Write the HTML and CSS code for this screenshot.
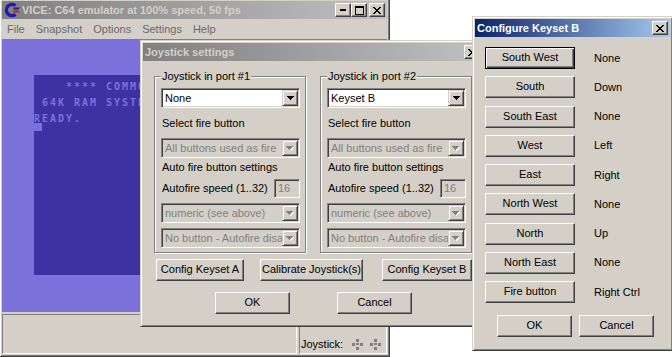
FILE: index.html
```html
<!DOCTYPE html>
<html>
<head>
<meta charset="utf-8">
<title>VICE</title>
<link rel="stylesheet" href="styles.css">
</head>
<body>
<div class="win main">
  <div class="titlebar inactive">
    <svg class="appicon" width="16" height="16" viewBox="0 0 16 16">
      <path d="M11.5 3.6 A5.6 5.6 0 1 0 11.5 12.4" fill="none" stroke="#1c1ca8" stroke-width="3.4"/>
      <path d="M9.5 5.5 H16 L14 7.6 H9.5 Z" fill="#1c1ca8"/>
      <path d="M9.5 8.4 H14 L16 10.5 H9.5 Z" fill="#d81c1c"/>
    </svg>
    <span class="title">VICE: C64 emulator at 100% speed, 50 fps</span>
    <div class="tbtns">
      <span class="tbtn"><svg width="6" height="2" viewBox="0 0 6 2"><rect width="6" height="2" fill="#000"/></svg></span>
      <span class="tbtn"><svg width="9" height="9" viewBox="0 0 9 9" shape-rendering="crispEdges"><path d="M0 0H9V9H0Z M1 2V8H8V2Z" fill="#000" fill-rule="evenodd"/></svg></span>
      <span class="tbtn gap"><svg width="8" height="7" viewBox="0 0 8 7" shape-rendering="crispEdges"><path d="M0 0h2v1h-2z M6 0h2v1h-2z M1 1h2v1h-2z M5 1h2v1h-2z M2 2h4v1h-4z M3 3h2v1h-2z M2 4h4v1h-4z M1 5h2v1h-2z M5 5h2v1h-2z M0 6h2v1h-2z M6 6h2v1h-2z" fill="#000"/></svg></span>
    </div>
  </div>
  <div class="menubar">
    <span>File</span><span>Snapshot</span><span>Options</span><span>Settings</span><span>Help</span>
  </div>
  <div class="screen">
    <div class="c64"><div class="c64line"> </div><div class="c64line">    **** COMMODORE 64 BASIC V2 ****</div><div class="c64line"> </div><div class="c64line"> 64K RAM SYSTEM  38911 BASIC BYTES FREE</div><div class="c64line"> </div><div class="c64line">READY.</div><div class="c64line"><span class="cursor"></span></div></div>
  </div>
  <div class="statusbar">
    <div class="panel p1"></div>
    <div class="panel p2">
      <span>Joystick:</span>
      <span class="joyind">
        <svg width="13" height="13" viewBox="0 0 13 13" shape-rendering="crispEdges"><g fill="#808080"><rect x="5" y="1" width="3" height="3"/><rect x="1" y="5" width="3" height="3"/><rect x="9" y="5" width="3" height="3"/><rect x="5" y="9" width="3" height="3"/><rect x="5" y="5" width="3" height="2"/></g></svg>
        <svg width="13" height="13" viewBox="0 0 13 13" shape-rendering="crispEdges"><g fill="#808080"><rect x="5" y="1" width="3" height="3"/><rect x="1" y="5" width="3" height="3"/><rect x="9" y="5" width="3" height="3"/><rect x="5" y="9" width="3" height="3"/><rect x="5" y="5" width="3" height="2"/></g></svg>
      </span>
    </div>
  </div>
</div>

<div class="win joy">
  <div class="titlebar inactive">
    <span class="title">Joystick settings</span>
    <div class="tbtns">
      <span class="tbtn"><svg width="8" height="7" viewBox="0 0 8 7" shape-rendering="crispEdges"><path d="M0 0h2v1h-2z M6 0h2v1h-2z M1 1h2v1h-2z M5 1h2v1h-2z M2 2h4v1h-4z M3 3h2v1h-2z M2 4h4v1h-4z M1 5h2v1h-2z M5 5h2v1h-2z M0 6h2v1h-2z M6 6h2v1h-2z" fill="#000"/></svg></span>
    </div>
  </div>
  <div class="joybody">
    <div class="groups">
      <fieldset class="group">
        <legend>Joystick in port #1</legend>
        <div class="combo"><span class="ctext">None</span><span class="arrow"><svg width="7" height="4" viewBox="0 0 7 4" shape-rendering="crispEdges"><path d="M0 0h7v1h-7z M1 1h5v1h-5z M2 2h3v1h-3z M3 3h1v1h-1z" fill="#000"/></svg></span></div>
        <div class="lbl l1">Select fire button</div>
        <div class="combo dis c2"><span class="ctext">All buttons used as fire</span><span class="arrow"><svg width="8" height="5" viewBox="0 0 8 5" shape-rendering="crispEdges"><path d="M1 1h7v1h-7z M2 2h5v1h-5z M3 3h3v1h-3z M4 4h1v1h-1z" fill="#fff"/><path d="M0 0h7v1h-7z M1 1h5v1h-5z M2 2h3v1h-3z M3 3h1v1h-1z" fill="#808080"/></svg></span></div>
        <div class="lbl l2">Auto fire button settings</div>
        <div class="afrow"><span>Autofire speed (1..32)</span><span class="edit">16</span></div>
        <div class="combo dis c3"><span class="ctext">numeric (see above)</span><span class="arrow"><svg width="8" height="5" viewBox="0 0 8 5" shape-rendering="crispEdges"><path d="M1 1h7v1h-7z M2 2h5v1h-5z M3 3h3v1h-3z M4 4h1v1h-1z" fill="#fff"/><path d="M0 0h7v1h-7z M1 1h5v1h-5z M2 2h3v1h-3z M3 3h1v1h-1z" fill="#808080"/></svg></span></div>
        <div class="combo dis c3"><span class="ctext">No button - Autofire disabled</span><span class="arrow"><svg width="8" height="5" viewBox="0 0 8 5" shape-rendering="crispEdges"><path d="M1 1h7v1h-7z M2 2h5v1h-5z M3 3h3v1h-3z M4 4h1v1h-1z" fill="#fff"/><path d="M0 0h7v1h-7z M1 1h5v1h-5z M2 2h3v1h-3z M3 3h1v1h-1z" fill="#808080"/></svg></span></div>
      </fieldset>
      <fieldset class="group">
        <legend>Joystick in port #2</legend>
        <div class="combo"><span class="ctext">Keyset B</span><span class="arrow"><svg width="7" height="4" viewBox="0 0 7 4" shape-rendering="crispEdges"><path d="M0 0h7v1h-7z M1 1h5v1h-5z M2 2h3v1h-3z M3 3h1v1h-1z" fill="#000"/></svg></span></div>
        <div class="lbl l1">Select fire button</div>
        <div class="combo dis c2"><span class="ctext">All buttons used as fire</span><span class="arrow"><svg width="8" height="5" viewBox="0 0 8 5" shape-rendering="crispEdges"><path d="M1 1h7v1h-7z M2 2h5v1h-5z M3 3h3v1h-3z M4 4h1v1h-1z" fill="#fff"/><path d="M0 0h7v1h-7z M1 1h5v1h-5z M2 2h3v1h-3z M3 3h1v1h-1z" fill="#808080"/></svg></span></div>
        <div class="lbl l2">Auto fire button settings</div>
        <div class="afrow"><span>Autofire speed (1..32)</span><span class="edit">16</span></div>
        <div class="combo dis c3"><span class="ctext">numeric (see above)</span><span class="arrow"><svg width="8" height="5" viewBox="0 0 8 5" shape-rendering="crispEdges"><path d="M1 1h7v1h-7z M2 2h5v1h-5z M3 3h3v1h-3z M4 4h1v1h-1z" fill="#fff"/><path d="M0 0h7v1h-7z M1 1h5v1h-5z M2 2h3v1h-3z M3 3h1v1h-1z" fill="#808080"/></svg></span></div>
        <div class="combo dis c3"><span class="ctext">No button - Autofire disabled</span><span class="arrow"><svg width="8" height="5" viewBox="0 0 8 5" shape-rendering="crispEdges"><path d="M1 1h7v1h-7z M2 2h5v1h-5z M3 3h3v1h-3z M4 4h1v1h-1z" fill="#fff"/><path d="M0 0h7v1h-7z M1 1h5v1h-5z M2 2h3v1h-3z M3 3h1v1h-1z" fill="#808080"/></svg></span></div>
      </fieldset>
    </div>
    <div class="btnrow1">
      <span class="btn ba">Config Keyset A</span>
      <span class="btn bcal">Calibrate Joystick(s)</span>
      <span class="btn bb">Config Keyset B</span>
    </div>
    <div class="btnrow2">
      <span class="btn bok">OK</span>
      <span class="btn bcancel">Cancel</span>
    </div>
  </div>
</div>

<div class="win keyset">
  <div class="titlebar active">
    <span class="title">Configure Keyset B</span>
    <div class="tbtns">
      <span class="tbtn"><svg width="8" height="7" viewBox="0 0 8 7" shape-rendering="crispEdges"><path d="M0 0h2v1h-2z M6 0h2v1h-2z M1 1h2v1h-2z M5 1h2v1h-2z M2 2h4v1h-4z M3 3h2v1h-2z M2 4h4v1h-4z M1 5h2v1h-2z M5 5h2v1h-2z M0 6h2v1h-2z M6 6h2v1h-2z" fill="#000"/></svg></span>
    </div>
  </div>
  <div class="ksbody">
    <div class="ksgrid">
      <span class="btn def">South West</span><span class="kslbl">None</span>
      <span class="btn">South</span><span class="kslbl">Down</span>
      <span class="btn">South East</span><span class="kslbl">None</span>
      <span class="btn">West</span><span class="kslbl">Left</span>
      <span class="btn">East</span><span class="kslbl">Right</span>
      <span class="btn">North West</span><span class="kslbl">None</span>
      <span class="btn">North</span><span class="kslbl">Up</span>
      <span class="btn">North East</span><span class="kslbl">None</span>
      <span class="btn">Fire button</span><span class="kslbl">Right Ctrl</span>
    </div>
    <div class="ksbtns">
      <span class="btn kok">OK</span>
      <span class="btn kcancel">Cancel</span>
    </div>
  </div>
</div>
</body>
</html>
```

FILE: styles.css
```css
* { box-sizing: border-box; margin: 0; padding: 0; }
html, body { width: 672px; height: 357px; overflow: hidden; background: #fff; }
body {
  position: relative;
  font-family: "Liberation Sans", Arial, sans-serif;
  font-size: 11px;
  line-height: 13px;
  color: #000;
}

.win {
  position: absolute;
  display: flex;
  flex-direction: column;
  overflow: hidden;
  background: #d4d0c8;
  border: 1px solid;
  border-color: #d4d0c8 #404040 #404040 #d4d0c8;
  box-shadow: inset 1px 1px 0 #fff, inset -1px -1px 0 #808080;
  padding: 2px;
}
.main { left: -1px; top: -2px; width: 391px; height: 359px; }
.joy { left: 140px; top: 40px; width: 345px; height: 287px; }
.keyset { left: 472px; top: 16px; width: 201px; height: 335px; }

.titlebar {
  flex: none;
  height: 18px;
  display: flex;
  align-items: center;
  padding: 0 2px;
}
.inactive { background: linear-gradient(to right, #808080, #c0c0c0); color: #d4d0c8; }
.active { background: linear-gradient(to right, #0a246a, #a6caf0); color: #fff; }
.appicon { flex: none; margin-right: 2px; }
.title { flex: 1; font-weight: bold; white-space: nowrap; overflow: hidden; }
.tbtns { display: flex; flex: none; }
.tbtn {
  width: 16px;
  height: 14px;
  display: flex;
  align-items: center;
  justify-content: center;
  background: #d4d0c8;
  border: 1px solid;
  border-color: #fff #404040 #404040 #fff;
  box-shadow: inset -1px -1px 0 #808080;
}
.tbtn.gap { margin-left: 2px; }
.tbtn svg { display: block; }

.menubar {
  flex: none;
  height: 20px;
  display: flex;
  align-items: center;
  gap: 11px;
  padding-left: 5px;
  color: #6a6a6a;
}

.screen {
  flex: none;
  height: 273px;
  background: #7c71da;
  padding: 36px 0 0 32px;
}
.c64 {
  width: 320px;
  height: 200px;
  background: #3e32a2;
  color: #7c71da;
  font-family: "DejaVu Sans Mono", monospace;
  font-weight: bold;
  font-size: 10px;
  letter-spacing: 1.98px;
}
.c64line { height: 8px; line-height: 8px; white-space: pre; }
.cursor { display: block; width: 8px; height: 8px; background: #7c71da; }

.statusbar {
  flex: none;
  height: 42px;
  display: flex;
  gap: 2px;
  padding-top: 2px;
}
.panel {
  border: 1px solid;
  border-color: #808080 #fff #fff #808080;
}
.p1 { width: 295px; }
.p2 {
  flex: 1;
  display: flex;
  align-items: flex-end;
  padding: 0 0 2px 1px;
}
.joyind { display: flex; gap: 5px; margin-left: 8px; }
.joyind svg { display: block; }

/* joystick dialog */
.joybody { flex: 1; padding: 9px 0 0 11px; }
.groups { display: flex; gap: 14px; }
.group {
  width: 152px;
  min-width: 0;
  border: 1px solid #808080;
  box-shadow: inset 1px 1px 0 #fff, 1px 1px 0 #fff;
  padding: 5px 5px 4px 6px;
}
.group legend {
  padding: 0 1px;
  background: #d4d0c8;
  line-height: 13px;
}
.combo {
  height: 20px;
  display: flex;
  background: #fff;
  border: 1px solid;
  border-color: #808080 #fff #fff #808080;
  box-shadow: inset 1px 1px 0 #404040, inset -1px -1px 0 #d4d0c8;
  padding: 1px;
}
.combo.dis { background: #d4d0c8; color: #808080; }
.c2 { margin-top: 8px; }
.c3 { margin-top: 5px; }
.ctext {
  flex: 1;
  min-width: 0;
  overflow: hidden;
  white-space: nowrap;
  padding-left: 2px;
  line-height: 16px;
}
.arrow {
  flex: none;
  width: 16px;
  height: 16px;
  display: flex;
  align-items: center;
  justify-content: center;
  background: #d4d0c8;
  border: 1px solid;
  border-color: #d4d0c8 #404040 #404040 #d4d0c8;
  box-shadow: inset 1px 1px 0 #fff, inset -1px -1px 0 #808080;
}
.arrow svg { display: block; }
.lbl { padding-left: 1px; }
.l1 { margin-top: 9px; }
.l2 { margin-top: 3px; }
.afrow {
  margin-top: 5px;
  height: 19px;
  display: flex;
  align-items: center;
  justify-content: space-between;
  padding-left: 1px;
}
.edit {
  width: 26px;
  height: 19px;
  border: 1px solid;
  border-color: #808080 #fff #fff #808080;
  box-shadow: inset 1px 1px 0 #404040, inset -1px -1px 0 #d4d0c8;
  color: #808080;
  padding-left: 3px;
  line-height: 17px;
}

.btn {
  display: flex;
  align-items: center;
  justify-content: center;
  height: 22px;
  white-space: nowrap;
  background: #d4d0c8;
  border: 1px solid;
  border-color: #fff #404040 #404040 #fff;
  box-shadow: inset -1px -1px 0 #808080;
  padding-bottom: 1px;
}
.btn.def {
  border-color: #000;
  box-shadow: inset 1px 1px 0 #fff, inset -1px -1px 0 #404040, inset -2px -2px 0 #808080;
}
.btnrow1 { display: flex; margin-top: 6px; }
.ba { width: 88px; margin-left: 2px; }
.bcal { width: 103px; margin-left: 16px; }
.bb { width: 90px; margin-left: 19px; }
.btnrow2 { display: flex; margin-top: 11px; }
.bok { width: 75px; margin-left: 61px; }
.bcancel { width: 75px; margin-left: 47px; }

/* keyset dialog */
.ksbody { flex: 1; padding: 10px 0 0 10px; }
.ksgrid {
  display: grid;
  grid-template-columns: 90px auto;
  grid-auto-rows: 22px;
  column-gap: 19px;
  row-gap: 7.25px;
}
.kslbl { display: flex; align-items: center; }
.ksbtns { display: flex; margin-top: 12px; }
.kok { width: 75px; margin-left: 12px; }
.kcancel { width: 75px; margin-left: 7px; }
```
